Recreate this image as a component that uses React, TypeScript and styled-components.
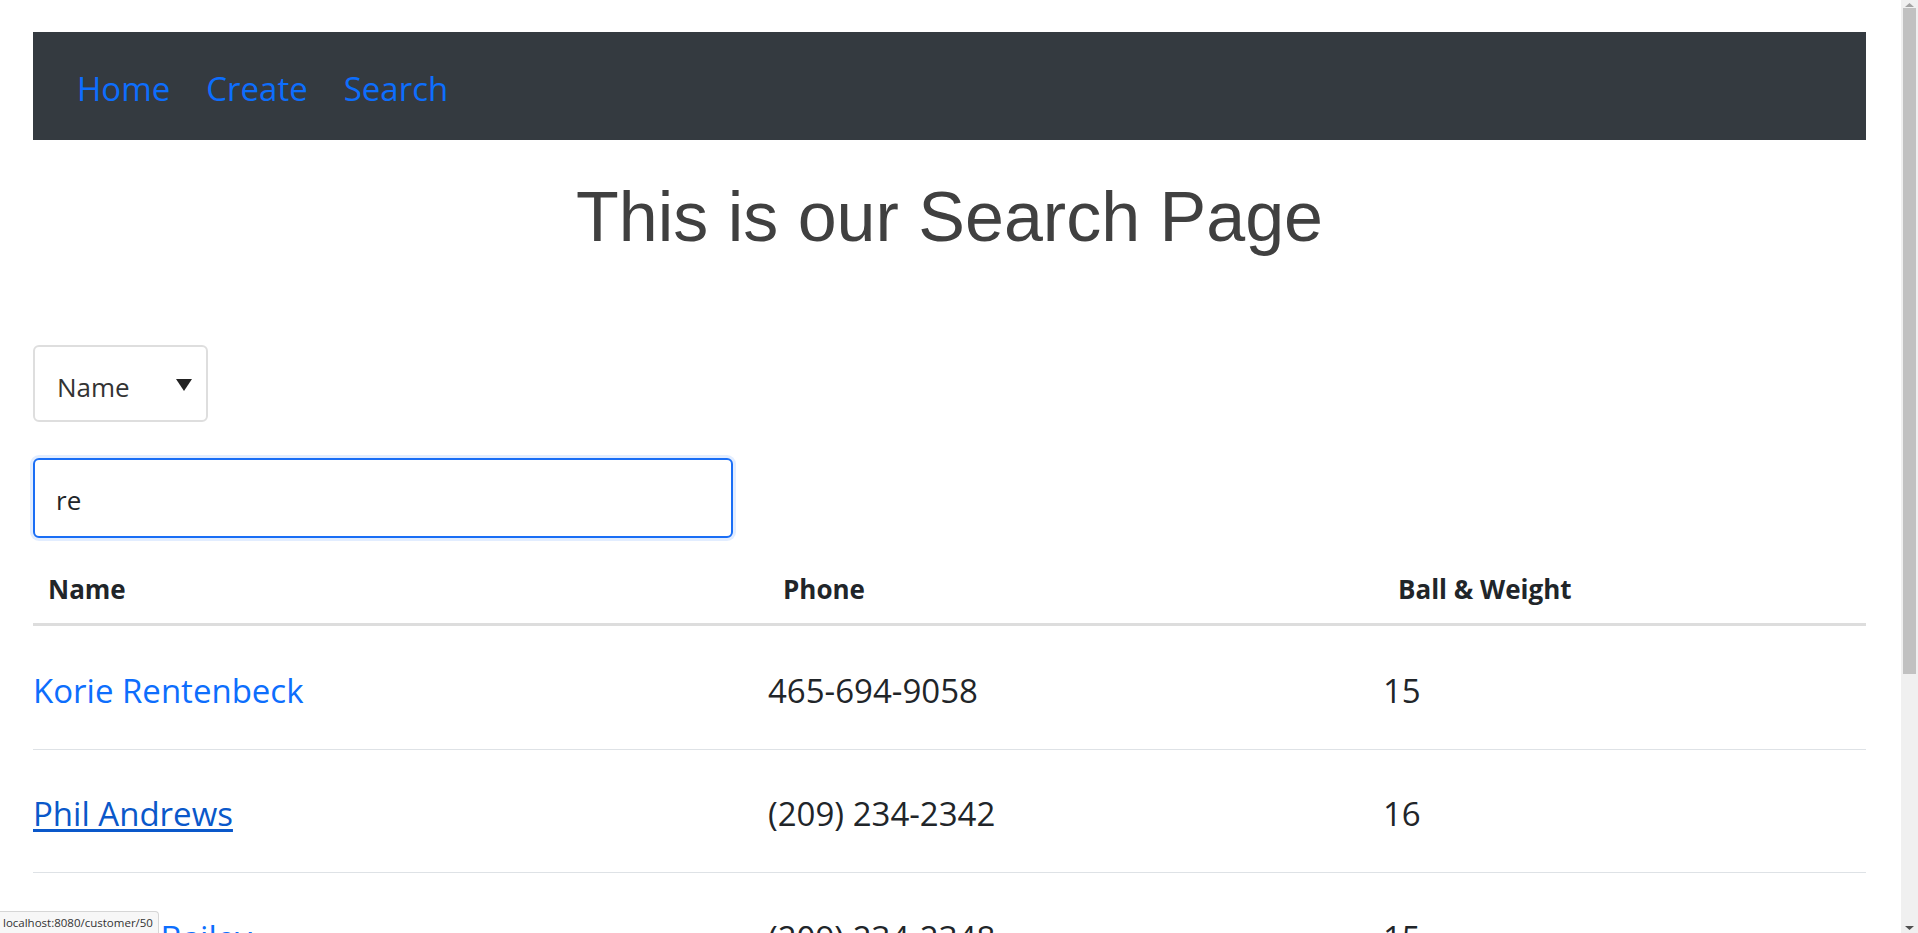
import React from "react";
import styled, { createGlobalStyle } from "styled-components";

const GlobalStyle = createGlobalStyle`
  html, body {
    margin: 0;
    padding: 0;
    background: #ffffff;
  }
  body {
    font-family: "Open Sans", "Noto Sans", sans-serif;
    color: #212529;
  }
`;

const Page = styled.div`
  padding: 32px 52px 60px 33px;
`;

const NavBar = styled.nav`
  box-sizing: border-box;
  height: 108px;
  background: #343a40;
  display: flex;
  align-items: center;
  padding: 5px 0 0 26px;
`;

const NavLink = styled.a`
  font-family: "Open Sans", "Noto Sans", sans-serif;
  font-size: 33px;
  line-height: 1.5;
  color: #0d6efd;
  text-decoration: none;
  padding: 0 18px;
`;

const Title = styled.h1`
  margin: 37px 0 0;
  font-family: "Liberation Sans", Arial, sans-serif;
  font-size: 70px;
  font-weight: normal;
  line-height: normal;
  color: #404040;
  text-align: center;
`;

const SelectWrap = styled.div`
  position: relative;
  display: inline-block;
  margin-top: 88px;
`;

const Select = styled.select`
  appearance: none;
  -webkit-appearance: none;
  box-sizing: border-box;
  width: 175px;
  height: 77px;
  padding: 21px 50px 13px 22px;
  font-family: "Open Sans", "Noto Sans", sans-serif;
  font-size: 26px;
  line-height: 39px;
  color: #333333;
  background: #ffffff;
  border: 2px solid #dedede;
  border-radius: 6px;
  outline: none;
`;

const Arrow = styled.svg`
  position: absolute;
  left: 142px;
  top: 33px;
  pointer-events: none;
`;

const SearchInput = styled.input`
  display: block;
  box-sizing: border-box;
  width: 700px;
  height: 80px;
  margin-top: 36px;
  padding: 4px 21px 0;
  font-family: "Open Sans", "Noto Sans", sans-serif;
  font-size: 26px;
  color: #212529;
  background: #ffffff;
  border: 2px solid #1a6ef5;
  border-radius: 6px;
  box-shadow: 0 0 0 3px rgba(13, 110, 253, 0.12);
  outline: none;
  caret-color: #000;
`;

const Table = styled.table`
  width: 100%;
  margin-top: 20px;
  border-collapse: collapse;
  table-layout: fixed;
`;

const Col = styled.col<{ $w?: number }>`
  width: ${(p) => (p.$w ? `${p.$w}px` : "auto")};
`;

const HeadCell = styled.th`
  text-align: left;
  padding: 12px 15px 14px;
  font-family: "Open Sans", "Noto Sans", sans-serif;
  font-size: 26px;
  font-weight: 700;
  line-height: 39px;
  color: #212529;
  border-bottom: 3px solid #dddddd;
`;

const Cell = styled.td`
  padding: 39.5px 0 33.5px;
  font-family: "Open Sans", "Noto Sans", sans-serif;
  font-size: 33px;
  line-height: 49.5px;
  color: #212529;
  border-bottom: 1px solid #dee2e6;
  vertical-align: middle;
`;

const NameLink = styled.a<{ $hover?: boolean }>`
  color: ${(p) => (p.$hover ? "#0a58ca" : "#0d6efd")};
  text-decoration: ${(p) => (p.$hover ? "underline" : "none")};
  text-underline-offset: 3px;
`;

const StatusBubble = styled.div`
  position: fixed;
  left: 0;
  bottom: 0;
  padding: 1px 5px 1px 3px;
  font-family: "Open Sans", "Noto Sans", sans-serif;
  font-size: 11.5px;
  line-height: 19px;
  color: #333333;
  background: #f7f7f7;
  border-top: 1px solid #d6d6d6;
  border-right: 1px solid #d6d6d6;
  border-top-right-radius: 4px;
`;

const ScrollTrack = styled.div`
  position: fixed;
  top: 0;
  right: 0;
  bottom: 0;
  width: 17px;
  background: #f0f0f0;
`;

const ScrollArrow = styled.svg<{ $bottom?: boolean }>`
  position: absolute;
  left: 4px;
  ${(p) => (p.$bottom ? "bottom: 3px;" : "top: 3px;")}
`;

const ScrollThumb = styled.div`
  position: absolute;
  top: 8px;
  left: 2px;
  width: 13px;
  height: 666px;
  background: #c1c1c1;
`;

type Customer = { id: number; name: string; phone: string; weight: number };

const customers: Customer[] = [
  { id: 12, name: "Korie Rentenbeck", phone: "465-694-9058", weight: 15 },
  { id: 50, name: "Phil Andrews", phone: "(209) 234-2342", weight: 16 },
  { id: 51, name: "Andrew Bailey", phone: "(209) 234-2348", weight: 15 },
  { id: 23, name: "Brenda Moore", phone: "(209) 555-0192", weight: 14 },
  { id: 31, name: "Greta Holmes", phone: "312-448-1207", weight: 12 },
  { id: 34, name: "Terrence Hill", phone: "(415) 882-3310", weight: 16 },
  { id: 38, name: "Lauren Price", phone: "702-316-5521", weight: 13 },
  { id: 41, name: "Frederick Stone", phone: "(209) 234-9981", weight: 15 },
  { id: 44, name: "Andrea Lopez", phone: "818-204-7763", weight: 11 },
  { id: 47, name: "Trevor Banks", phone: "(559) 410-2284", weight: 16 },
  { id: 53, name: "Marie Reynolds", phone: "646-920-3357", weight: 12 },
  { id: 56, name: "Renee Carter", phone: "(209) 871-4402", weight: 14 },
  { id: 58, name: "Oren Fischer", phone: "503-667-1185", weight: 15 },
];

export default function App() {
  return (
    <>
      <GlobalStyle />
      <Page>
        <NavBar>
          <NavLink href="#">Home</NavLink>
          <NavLink href="#">Create</NavLink>
          <NavLink href="#">Search</NavLink>
        </NavBar>

        <Title>This is our Search Page</Title>

        <SelectWrap>
          <Select defaultValue="name">
            <option value="name">Name</option>
            <option value="phone">Phone</option>
          </Select>
          <Arrow width="18" height="13" viewBox="0 0 18 13">
            <path d="M1 1 H17 L9 13 Z" fill="#222222" />
          </Arrow>
        </SelectWrap>

        <SearchInput type="text" defaultValue="re" autoFocus />

        <Table>
          <colgroup>
            <Col $w={735} />
            <Col $w={615} />
            <Col />
          </colgroup>
          <thead>
            <tr>
              <HeadCell>Name</HeadCell>
              <HeadCell>Phone</HeadCell>
              <HeadCell>Ball &amp; Weight</HeadCell>
            </tr>
          </thead>
          <tbody>
            {customers.map((c) => (
              <tr key={c.id}>
                <Cell>
                  <NameLink href={`#/customer/${c.id}`} $hover={c.id === 50}>
                    {c.name}
                  </NameLink>
                </Cell>
                <Cell>{c.phone}</Cell>
                <Cell>{c.weight}</Cell>
              </tr>
            ))}
          </tbody>
        </Table>
      </Page>
      <ScrollTrack aria-hidden="true">
        <ScrollArrow width="9" height="4" viewBox="0 0 9 4">
          <path d="M0 4 L4.5 0 L9 4 Z" fill="#a3a3a3" />
        </ScrollArrow>
        <ScrollThumb />
        <ScrollArrow $bottom width="9" height="4" viewBox="0 0 9 4">
          <path d="M0 0 H9 L4.5 4 Z" fill="#505050" />
        </ScrollArrow>
      </ScrollTrack>
      <StatusBubble>localhost:8080/customer/50</StatusBubble>
    </>
  );
}
